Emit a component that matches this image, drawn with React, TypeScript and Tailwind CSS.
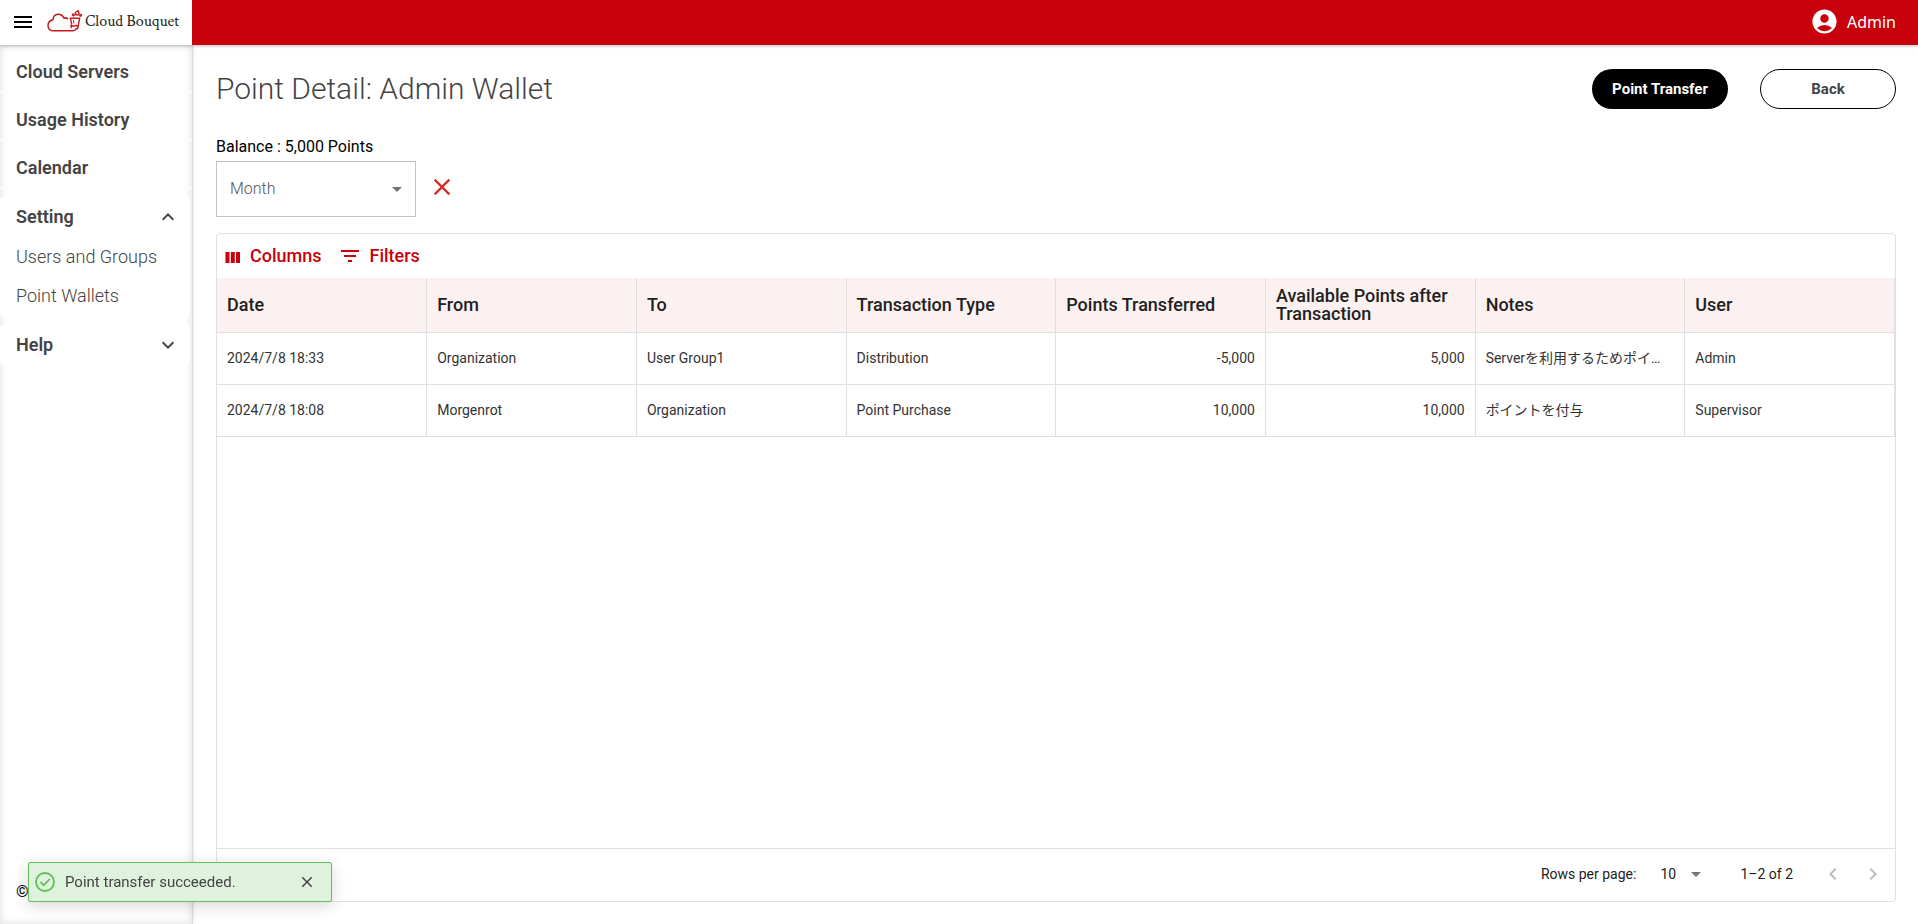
import { useState } from "react";
import {
  MdAccountCircle,
  MdArrowDropDown,
  MdChevronLeft,
  MdChevronRight,
  MdClose,
  MdExpandLess,
  MdExpandMore,
  MdFilterList,
  MdMenu,
} from "react-icons/md";

type Column = { key: string; label: string; numeric?: boolean };

const columns: Column[] = [
  { key: "date", label: "Date" },
  { key: "from", label: "From" },
  { key: "to", label: "To" },
  { key: "type", label: "Transaction Type" },
  { key: "points", label: "Points Transferred", numeric: true },
  { key: "available", label: "Available Points after Transaction", numeric: true },
  { key: "notes", label: "Notes" },
  { key: "user", label: "User" },
];

const rows: Record<string, string>[] = [
  {
    date: "2024/7/8 18:33",
    from: "Organization",
    to: "User Group1",
    type: "Distribution",
    points: "-5,000",
    available: "5,000",
    notes: "Serverを利用するためポイ…",
    user: "Admin",
  },
  {
    date: "2024/7/8 18:08",
    from: "Morgenrot",
    to: "Organization",
    type: "Point Purchase",
    points: "10,000",
    available: "10,000",
    notes: "ポイントを付与",
    user: "Supervisor",
  },
];

function CloudLogo() {
  return (
    <svg
      viewBox="0 0 36 24"
      className="h-6 w-9 shrink-0"
      fill="none"
      stroke="#c8161d"
      strokeWidth="1.5"
      strokeLinecap="round"
      strokeLinejoin="round"
      aria-hidden="true"
    >
      <path d="M20.500 8.600c-1-.8-2.300-.9-3.500-.4C15.700 5.400 13.500 4 11 4.200 8.200 4.400 6.200 6.700 6 9.700 3 10.300 1 12.600 1 15.600 1 18.800 3.400 20.800 6.300 20.800H25.500c1.800 0 3.200-.9 3.800-2.300" />
      <path d="M23.300 8.200h9.400l-1.500 7.600M23.300 8.200l1.400 5.800M24.300 17.600l-.4-2.200 3 .8 2-.8 2.200 1.200-.6 2.200" strokeWidth="1.400" />
      <path d="M26.500 10.500l.3 2.500" strokeWidth="1" />
      <circle cx="26.300" cy="4.800" r="1" strokeWidth="1.300" />
      <circle cx="30.200" cy="3.200" r="1.800" strokeWidth="1.400" />
      <circle cx="33.600" cy="5.300" r=".9" strokeWidth="1.300" />
      <circle cx="31" cy="0.800" r=".3" strokeWidth="1" />
    </svg>
  );
}

function Sidebar() {
  const [settingOpen, setSettingOpen] = useState(true);
  return (
    <nav
      aria-label="Main"
      className="relative z-10 flex w-[193px] shrink-0 flex-col border-r border-[#dcdcdc] bg-white text-lg leading-6 text-[#444444] shadow-[inset_0_0_8px_rgba(0,0,0,0.14),1px_0_3px_rgba(0,0,0,0.08)]"
    >
      {["Cloud Servers", "Usage History", "Calendar"].map((label) => (
        <a key={label} href="#" className="flex h-12 items-center border-b border-white px-4 pt-1.5 font-semibold">
          {label}
        </a>
      ))}
      <div className="mt-2 mr-[2px] rounded bg-white">
        <button
          type="button"
          aria-expanded={settingOpen}
          onClick={() => setSettingOpen(!settingOpen)}
          className="flex h-10 w-full items-center justify-between pr-[10px] pl-4 font-semibold"
        >
          Setting
          <MdExpandLess className="size-6" />
        </button>
        {settingOpen && (
          <div className="pb-px font-light">
            <a href="#" className="flex h-[39px] items-center px-4">
              Users and Groups
            </a>
            <a href="#" className="flex h-10 items-center px-4">
              Point Wallets
            </a>
          </div>
        )}
      </div>
      <button
        type="button"
        className="mt-2 mr-[2px] flex h-10 items-center justify-between rounded bg-white pr-[10px] pl-4 font-semibold"
      >
        Help
        <MdExpandMore className="size-6" />
      </button>
      <footer className="mt-auto px-4 pb-5 text-base text-black">©</footer>
    </nav>
  );
}

function PointTable() {
  return (
    <section className="mt-4 flex grow flex-col rounded border border-[#e0e0e0]">
      <div className="flex h-11 items-center gap-4 px-2 text-lg font-medium text-[#c7000b]">
        <button type="button" className="flex items-center gap-[9px]">
          <svg viewBox="0 0 16 14" className="h-3.5 w-4" fill="currentColor" aria-hidden="true">
            <path d="M0.500 3h4v11h-4zM5.800 3h4v11h-4zM11 3h4v11h-4z" />
          </svg>
          Columns
        </button>
        <button type="button" className="flex items-center gap-2">
          <MdFilterList className="size-6" />
          Filters
        </button>
      </div>
      <table className="w-full table-fixed border-collapse text-left">
        <thead>
          <tr className="h-[54px] border-b border-[#e0e0e0] bg-[#fcf1f1]">
            {columns.map((c) => (
              <th
                key={c.key}
                scope="col"
                className="border-r border-[#e0e0e0] px-[10px] text-lg leading-[18px] font-medium text-[#212121]"
              >
                {c.label}
              </th>
            ))}
          </tr>
        </thead>
        <tbody>
          {rows.map((r) => (
            <tr key={r.date} className="h-[52px] border-b border-[#e0e0e0]">
              {columns.map((c) => (
                <td
                  key={c.key}
                  className={`truncate border-r border-[#e0e0e0] px-[10px] text-sm text-[#333333] ${c.numeric ? "text-right" : ""}`}
                >
                  {r[c.key]}
                </td>
              ))}
            </tr>
          ))}
        </tbody>
      </table>
      <div className="mt-auto flex h-[53px] items-center justify-end border-t border-[#e0e0e0] pr-[10px] pb-[2px] text-sm text-[#212121]">
        <label htmlFor="page-size">Rows per page:</label>
        <div className="relative ml-6 flex items-center">
          <select id="page-size" defaultValue="10" className="w-12 appearance-none bg-transparent">
            <option>10</option>
            <option>25</option>
          </select>
          <MdArrowDropDown className="pointer-events-none absolute right-0 size-6 text-[#757575]" />
        </div>
        <span className="ml-8">1–2 of 2</span>
        <button type="button" disabled aria-label="Previous page" className="ml-7 text-[#bdbdbd]">
          <MdChevronLeft className="size-6" />
        </button>
        <button type="button" disabled aria-label="Next page" className="ml-4 text-[#bdbdbd]">
          <MdChevronRight className="size-6" />
        </button>
      </div>
    </section>
  );
}

function Toast({ onClose }: { onClose: () => void }) {
  return (
    <div
      role="status"
      className="fixed bottom-[22px] left-7 z-20 flex h-10 w-[304px] items-center rounded-xs border border-[#5fc157] bg-[#dff2dd] px-[6px] text-[15px] text-[#444444] shadow-[0_4px_16px_rgba(0,0,0,0.16)]"
    >
      <svg viewBox="0 0 20 20" className="size-5" fill="none" stroke="#5fc157" strokeWidth="1.800" aria-hidden="true">
        <circle cx="10" cy="10" r="9" />
        <path d="M5.500 10l3.200 3.300 6-6.300" />
      </svg>
      <span className="ml-[10px]">Point transfer succeeded.</span>
      <button type="button" aria-label="Close" onClick={onClose} className="mr-[9px] ml-auto">
        <MdClose className="size-[18px]" />
      </button>
    </div>
  );
}

export default function App() {
  const [toast, setToast] = useState(true);
  return (
    <div className="flex min-h-screen flex-col bg-white font-['Roboto','Noto_Sans_CJK_JP',sans-serif] text-black">
      <header className="relative z-20 flex h-[45px] bg-[#c7000b] shadow-[0_1px_3px_rgba(0,0,0,0.25)]">
        <div className="flex w-48 items-center bg-white pb-[2px] pl-[11px]">
          <button type="button" aria-label="Menu">
            <MdMenu className="size-6" />
          </button>
          <a href="#" className="ml-3 flex items-center gap-[2px] font-['Crimson_Text','Liberation_Serif',serif] text-base whitespace-nowrap text-[#222222]">
            <CloudLogo />
            Cloud Bouquet
          </a>
        </div>
        <button type="button" className="ml-auto flex items-center gap-2 pr-[22px] pb-[2px] font-['Noto_Sans',sans-serif] text-base text-white">
          <MdAccountCircle className="size-[29px]" />
          Admin
        </button>
      </header>
      <div className="flex grow">
        <Sidebar />
        <main className="flex min-w-0 grow flex-col pt-6 pr-[22px] pb-[22px] pl-[23px]">
          <div className="flex items-center gap-8">
            <h1 className="mr-auto text-3xl leading-10 font-light text-[#444444]">Point Detail: Admin Wallet</h1>
            <button type="button" className="h-10 w-[136px] rounded-full bg-black text-[15px] font-bold text-white">
              Point Transfer
            </button>
            <button type="button" className="h-10 w-[136px] rounded-full border border-black text-[15px] font-bold text-[#444444]">
              Back
            </button>
          </div>
          <p className="mt-6 text-base leading-7">Balance : 5,000 Points</p>
          <div className="flex items-center gap-3">
            <div className="relative flex items-center">
              <select
                aria-label="Month"
                defaultValue="Month"
                className="h-14 w-[200px] appearance-none border border-[#c4c4c4] bg-white pl-[13px] text-base font-light text-[#555555]"
              >
                <option>Month</option>
              </select>
              <MdArrowDropDown className="pointer-events-none absolute right-[7px] size-6 text-[#757575]" />
            </div>
            <button type="button" aria-label="Clear month" className="pb-1 text-[#d32f2f]">
              <MdClose className="size-7" />
            </button>
          </div>
          <PointTable />
        </main>
      </div>
      {toast && <Toast onClose={() => setToast(false)} />}
    </div>
  );
}
